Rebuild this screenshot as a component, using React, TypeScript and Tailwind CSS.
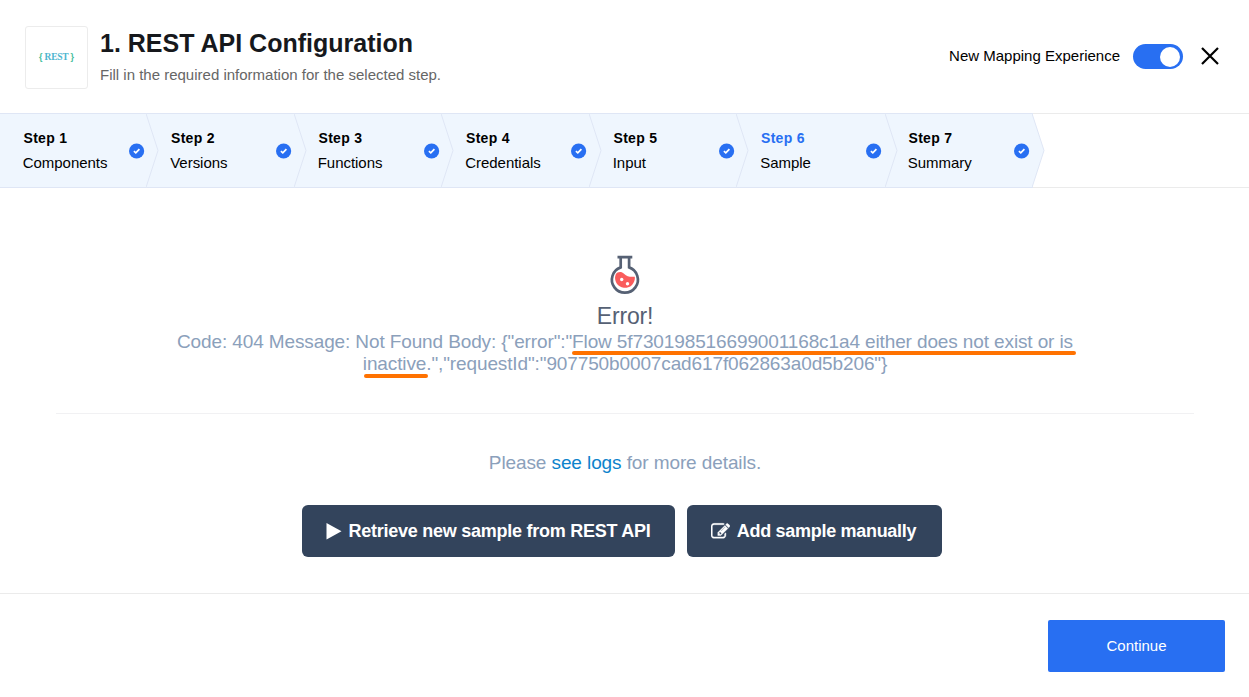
import React from "react";

const steps = ["Components", "Versions", "Functions", "Credentials", "Input", "Sample", "Summary"];

function StepCheck() {
  return (
    <svg className="mt-[29px] h-4 w-4 shrink-0" viewBox="0 0 16 16">
      <circle cx="7.6" cy="8" r="7.6" fill="#286ff2" />
      <path d="M4.900 8.200 6.800 9.900 10.400 6.200" fill="none" stroke="#fff" strokeWidth="1.7" />
    </svg>
  );
}

function Step({ index, name }: { index: number; name: string }) {
  return (
    <li className="relative flex h-full w-[147.5px] shrink-0 justify-between border-y border-[#dfe6f5] bg-[#eff6fe] pl-[23px] pr-[3px]">
      <div className="pt-[14px] leading-[20px]">
        <div className={index === 6 ? "ml-[0.5px] text-[14px] font-bold tracking-[0.3px] text-[#286ff2]" : "ml-[0.5px] text-[14px] font-bold tracking-[0.3px]"}>
          Step {index}
        </div>
        <div className="-ml-[0.3px] mt-[5px] text-[15px] tracking-[-0.03px]">{name}</div>
      </div>
      <StepCheck />
      <svg
        className={index > 5 ? "absolute -top-px left-full z-10 -ml-[0.5px] h-[75px] w-[13px]" : "absolute -top-px left-full z-10 -ml-[1.5px] h-[75px] w-[13px]"}
        viewBox="0 0 13 75"
      >
        <path d="M-1 0.5 0 0.5 12 37.5 0 74.5 -1 74.5Z" fill="#eff6fe" />
        <path d="M-1 0.5H0L12 37.5 0 74.5H-1" fill="none" stroke="#dfe6f5" />
      </svg>
    </li>
  );
}

function Flask() {
  return (
    <svg className="h-10 w-8 shrink-0" viewBox="0 0 32 40">
      <path d="M8.500 2.200H23.300M11.700 2.500V12.400A13 13 0 1 0 20.100 12.400V2.500" fill="none" stroke="#566174" strokeWidth="2.700" />
      <path d="M6.700 19.500C8.500 16.500 12.500 16.300 15 18.700C18 21.500 20.500 22 25.800 21.700A9.900 9.900 0 1 1 6.700 19.500" fill="#fa5c5c" />
      <circle cx="12.700" cy="24.500" r="1.700" fill="#fff" />
      <circle cx="18.500" cy="28.800" r="1.700" fill="#fff" />
    </svg>
  );
}

function PlayIcon() {
  return (
    <svg className="mr-[6px] h-[17px] w-4" viewBox="0 0 16 17" fill="currentColor">
      <path d="M0.500 0 15.500 8.300 0.500 16.500Z" />
    </svg>
  );
}

function EditIcon() {
  return (
    <svg className="h-[19px] w-[19px]" viewBox="0 0 1792 1792" fill="currentColor" stroke="currentColor" strokeWidth="35">
      <path d="M888 1184l116-116-152-152-116 116v56h96v96h56zm440-720q-16-16-33 1l-350 350q-17 17-1 33t33-1l350-350q17-17 1-33zm80 594v190q0 119-84.500 203.500t-203.500 84.500h-832q-119 0-203.500-84.500t-84.500-203.500v-832q0-119 84.500-203.500t203.500-84.500h832q63 0 117 25 15 7 18 23 3 17-9 29l-49 49q-14 14-32 8-23-6-45-6h-832q-66 0-113 47t-47 113v832q0 66 47 113t113 47h832q66 0 113-47t47-113v-126q0-13 9-22l64-64q15-15 35-7t20 29zm-96-738l288 288-672 672h-288v-288zm444 132l-92 92-288-288 92-92q28-28 68-28t68 28l152 152q28 28 28 68t-28 68z" />
    </svg>
  );
}

export default function App() {
  return (
    <div className="flex h-[697px] w-[1249px] flex-col overflow-hidden bg-white font-['Liberation_Sans',Arial,sans-serif] text-black">
      <header className="flex h-[113px] shrink-0 items-start pl-[25px] pt-[26px]">
        <div className="flex h-[63px] w-[63px] items-center justify-center rounded-[3px] border border-[#ececec] text-[#43bd9b]">
          <span className="text-[9px] font-bold">{"{"}</span>
          <span className="ml-[2px] mr-[2px] font-['Liberation_Serif',serif] text-[9.5px] font-bold tracking-[-0.25px] text-[#4eb5cf]">REST</span>
          <span className="text-[9px] font-bold">{"}"}</span>
        </div>
        <div className="ml-3 grow">
          <h1 className="mt-[2px] text-[25px] font-bold leading-[30px] text-[#16181c]">1. REST API Configuration</h1>
          <p className="mt-[7px] text-[15px] leading-[20px] text-[#666]">Fill in the required information for the selected step.</p>
        </div>
        <div className="flex items-center pr-[29px] pt-[18px]">
          <span className="text-[15px]">New Mapping Experience</span>
          <button className="ml-[13px] flex h-[25px] w-[50px] items-center justify-end rounded-full bg-[#286ff2] pr-[3px]">
            <span className="h-5 w-5 rounded-full bg-white" />
          </button>
          <svg className="-mt-px ml-[17px] h-5 w-5" viewBox="0 0 20 20" fill="none" stroke="#000" strokeWidth="2.2">
            <path d="M2 2 18 18M18 2 2 18" />
          </svg>
        </div>
      </header>
      <ol className="flex h-[75px] shrink-0">
        {steps.map((name, i) => (
          <Step key={name} index={i + 1} name={name} />
        ))}
        <li className="grow border-y border-[#ebebeb]" />
      </ol>
      <main className="flex h-[405px] shrink-0 flex-col items-center pt-[67px] text-[19px] leading-[22px] tracking-[-0.12px] text-[#8ba0bb]">
        <Flask />
        <h2 className="ml-px mt-[7px] text-[23px] leading-[28px] tracking-[-0.2px] text-[#566174]">Error!</h2>
        <div className="ml-px mt-px text-center">
          <p>Code: 404 Message: Not Found Body: {'{"error":"'}<span className="relative">Flow 5f730198516699001168c1a4 either does not exist or is<i className="absolute -right-[3px] bottom-[-3px] left-0 h-1 rounded-full bg-[#ff7200]" /></span></p>
          <p><span className="relative">inactive<i className="absolute -right-[2px] bottom-[-4px] left-px h-1 rounded-full bg-[#ff7200]" /></span>{'.","requestId":"907750b0007cad617f062863a0d5b206"}'}</p>
        </div>
        <hr className="mt-[38px] w-[1138px] border-[#f1f1f3]" />
        <p className="ml-px mt-[38px] tracking-[-0.1px]">Please <a className="text-[#0c83cc]">see logs</a> for more details.</p>
        <div className="mr-[5px] mt-[31px] flex gap-3 text-[18px] font-bold tracking-[-0.25px] text-white">
          <button className="flex h-[52px] w-[373px] items-center justify-center rounded-[6px] bg-[#33445c]">
            <PlayIcon />
            Retrieve new sample from REST API
          </button>
          <button className="flex h-[52px] w-[255px] items-center justify-center rounded-[6px] bg-[#33445c] pr-[2px]">
            <EditIcon />
            <span className="ml-[7px] tracking-[-0.3px]">Add sample manually</span>
          </button>
        </div>
      </main>
      <footer className="flex grow items-start justify-end border-t border-[#ebebeb] pr-6 pt-[26px]">
        <button className="h-[52px] w-[177px] rounded-[2px] bg-[#286ff2] text-[15px] text-white">Continue</button>
      </footer>
    </div>
  );
}
